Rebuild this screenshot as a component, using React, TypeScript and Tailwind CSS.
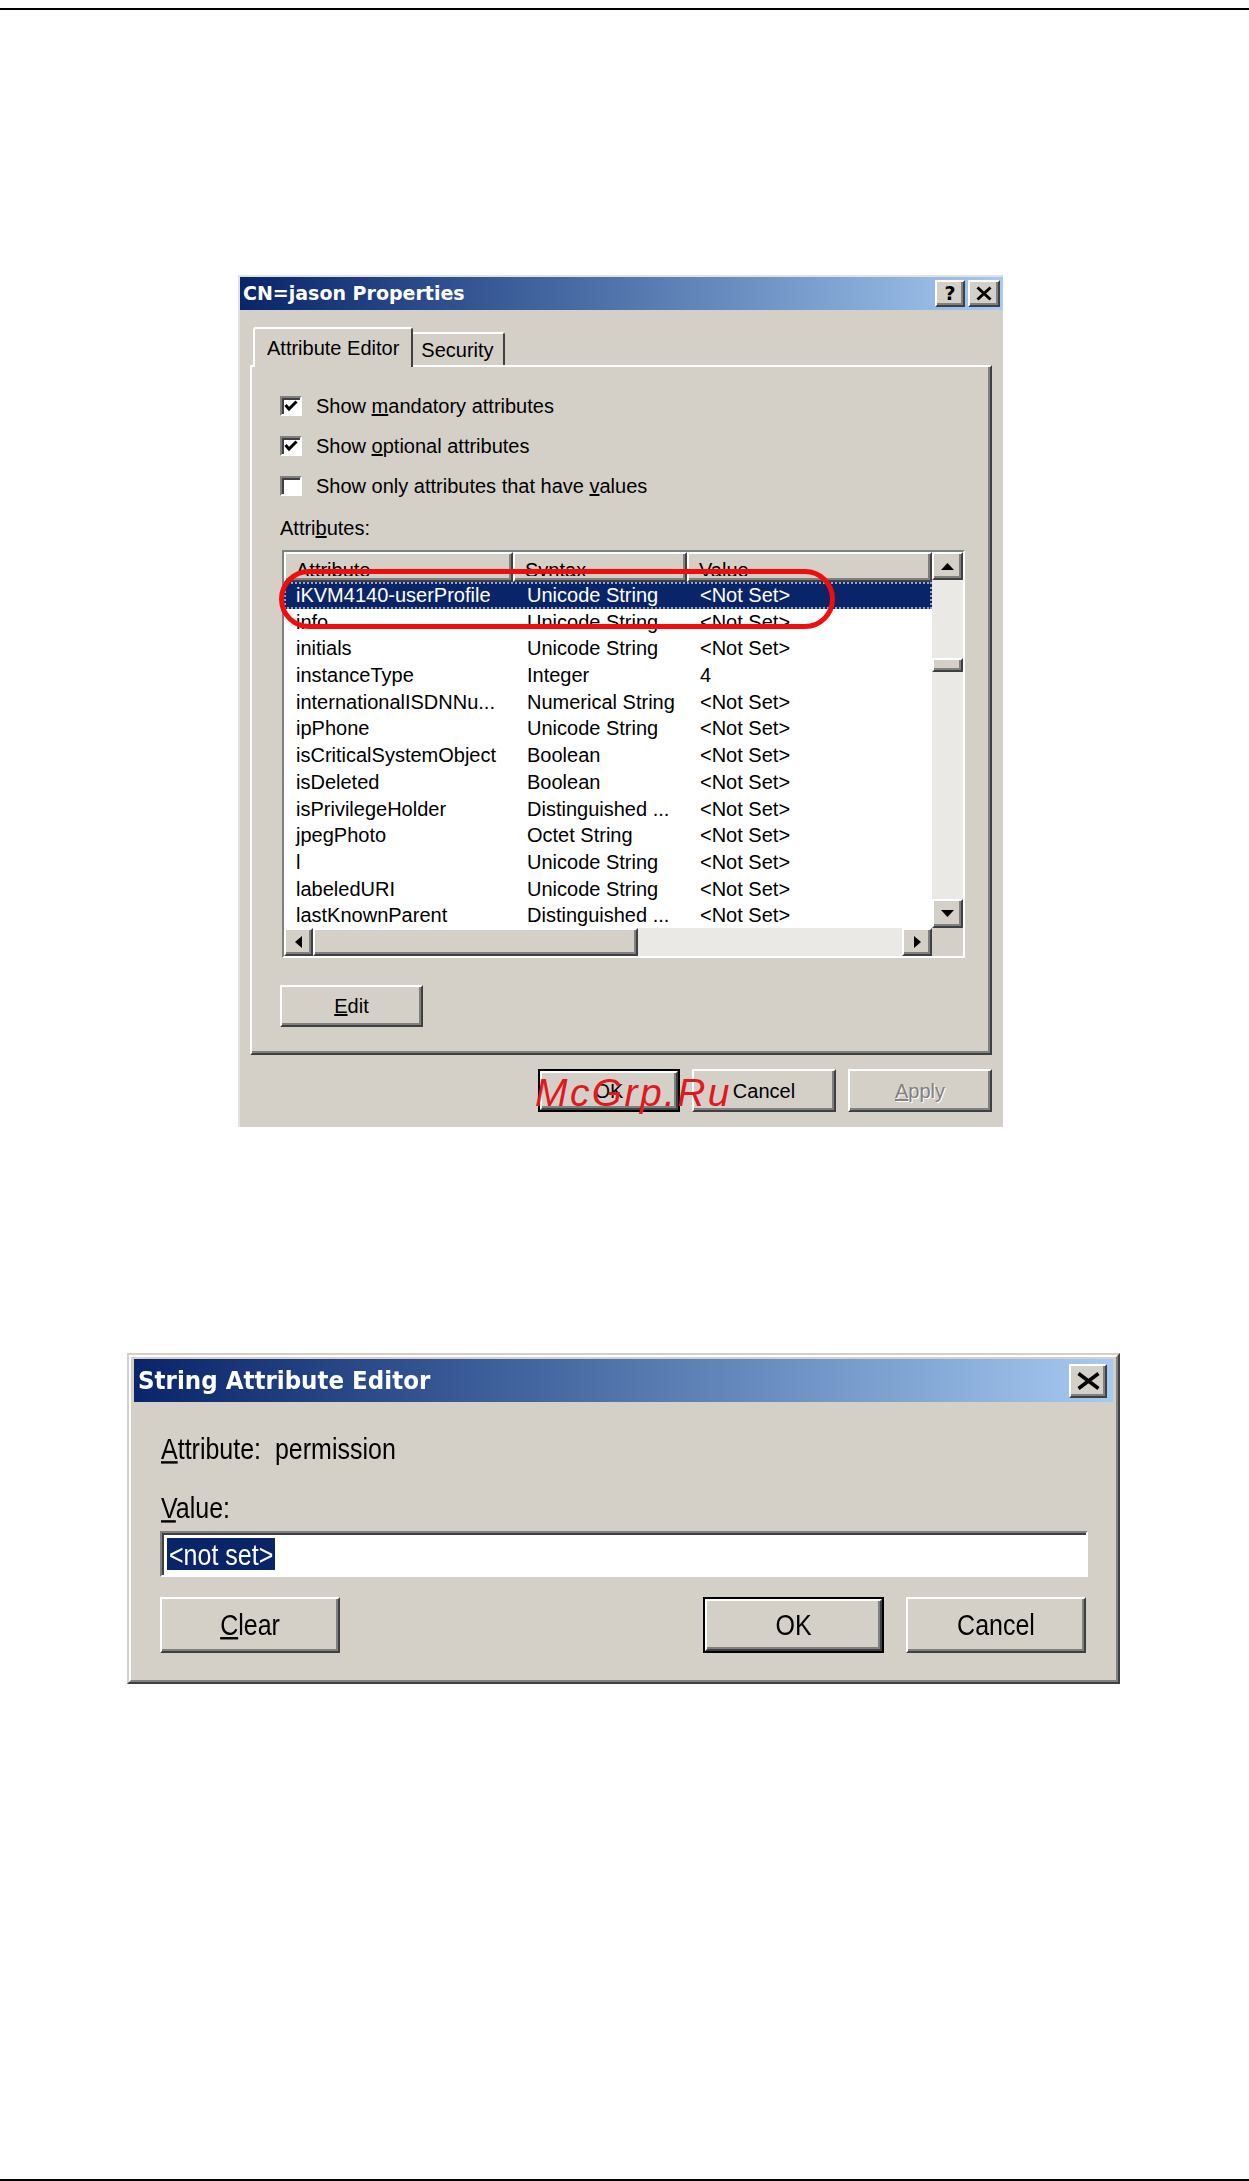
import React from "react";

const raised =
  "border-2 border-t-white border-l-white border-r-[#404040] border-b-[#404040] shadow-[inset_-2px_-2px_0_#808080] bg-[#d4d0c8]";
const sunken =
  "border-2 border-t-[#808080] border-l-[#808080] border-r-white border-b-white shadow-[inset_2px_2px_0_#404040]";

const rows = [
  ["iKVM4140-userProfile", "Unicode String", "<Not Set>"],
  ["info", "Unicode String", "<Not Set>"],
  ["initials", "Unicode String", "<Not Set>"],
  ["instanceType", "Integer", "4"],
  ["internationalISDNNu...", "Numerical String", "<Not Set>"],
  ["ipPhone", "Unicode String", "<Not Set>"],
  ["isCriticalSystemObject", "Boolean", "<Not Set>"],
  ["isDeleted", "Boolean", "<Not Set>"],
  ["isPrivilegeHolder", "Distinguished ...", "<Not Set>"],
  ["jpegPhoto", "Octet String", "<Not Set>"],
  ["l", "Unicode String", "<Not Set>"],
  ["labeledURI", "Unicode String", "<Not Set>"],
  ["lastKnownParent", "Distinguished ...", "<Not Set>"],
];

function CloseGlyph({ w, h, sw }: { w: number; h: number; sw: number }) {
  return (
    <svg width={w} height={h} viewBox={`0 0 ${w} ${h}`}>
      <path
        d={`M1.5 1.5 L${w - 1.5} ${h - 1.5} M${w - 1.5} 1.5 L1.5 ${h - 1.5}`}
        stroke="black"
        strokeWidth={sw}
      />
    </svg>
  );
}

function Arrow({ dir }: { dir: "up" | "down" | "left" | "right" }) {
  if (dir === "up")
    return (
      <svg width="13" height="7">
        <polygon points="0,7 13,7 6.5,0" fill="black" />
      </svg>
    );
  if (dir === "down")
    return (
      <svg width="13" height="7">
        <polygon points="0,0 13,0 6.5,7" fill="black" />
      </svg>
    );
  if (dir === "left")
    return (
      <svg width="7" height="12">
        <polygon points="7,0 7,12 0,6" fill="black" />
      </svg>
    );
  return (
    <svg width="7" height="12">
      <polygon points="0,0 0,12 7,6" fill="black" />
    </svg>
  );
}

function CheckBox({ checked }: { checked: boolean }) {
  return (
    <div className={`w-[22px] h-[20px] bg-white flex items-center justify-center ${sunken}`}>
      {checked && (
        <svg width="14" height="12" viewBox="0 0 14 12">
          <path d="M1.5 5 L5 9 L12.5 1.5" stroke="black" strokeWidth="3" fill="none" />
        </svg>
      )}
    </div>
  );
}

function PropertiesDialog() {
  return (
    <div className="relative ml-[238px] mt-[265px] w-[765px] bg-[#d4d0c8] border-t-2 border-l-2 border-t-[#e4e2dc] border-l-[#e4e2dc] pb-[15px] text-[20px] text-black">
      {/* title bar */}
      <div className="flex h-[33px] items-center justify-between bg-linear-to-r from-[#0a246a] to-[#a6caf0] pl-[3px] pr-[3px]">
        <span className="font-['DejaVu_Sans',Verdana,sans-serif] text-[19px] font-bold text-white">
          CN=jason Properties
        </span>
        <div className="flex gap-[3px]">
          <div className={`w-[30px] h-[27px] flex items-center justify-center ${raised}`}>
            <span className="font-['DejaVu_Sans',Verdana,sans-serif] text-[19px] font-bold leading-none">?</span>
          </div>
          <div className={`w-[32px] h-[27px] flex items-center justify-center ${raised}`}>
            <CloseGlyph w={16} h={15} sw={3} />
          </div>
        </div>
      </div>

      {/* tabs */}
      <div className="relative z-10 ml-[13px] mt-[17px] flex items-end">
        <div className="h-[40px] -mb-[2px] pl-[12px] pr-[12px] flex items-center bg-[#d4d0c8] border-t-2 border-l-2 border-r-2 border-t-white border-l-white border-r-[#404040] rounded-t-[3px]">
          Attribute Editor
        </div>
        <div className="h-[33px] pl-[8px] pr-[9px] flex items-center bg-[#d4d0c8] border-t-2 border-r-2 border-t-white border-r-[#404040] rounded-tr-[3px]">
          Security
        </div>
      </div>

      {/* tab panel */}
      <div className="ml-[10px] mr-[11px] border-2 border-t-white border-l-white border-r-[#404040] border-b-[#404040] shadow-[inset_-2px_-2px_0_#808080] pl-[28px] pt-[19px] pb-[26px]">
        <div className="h-[40px] flex items-center gap-[14px]">
          <CheckBox checked />
          <span>
            Show <u>m</u>andatory attributes
          </span>
        </div>
        <div className="h-[40px] flex items-center gap-[14px]">
          <CheckBox checked />
          <span>
            Show <u>o</u>ptional attributes
          </span>
        </div>
        <div className="h-[40px] flex items-center gap-[14px]">
          <CheckBox checked={false} />
          <span>
            Show only attributes that have <u>v</u>alues
          </span>
        </div>
        <div className="mt-[2px] h-[40px] flex items-center">
          <span>
            Attri<u>b</u>utes:
          </span>
        </div>

        {/* list view */}
        <div className={`mt-[2px] ml-[2px] w-[683px] h-[408px] bg-white ${sunken}`}>
          <div className="grid grid-cols-[648px_31px] grid-rows-[376px_28px]">
            <div className="overflow-hidden bg-white">
              <div className="flex h-[30px]">
                {[
                  ["Attribute", "w-[229px]"],
                  ["Syntax", "w-[174px]"],
                  ["Value", "w-[245px]"],
                ].map(([t, w]) => (
                  <div key={t} className={`${w} h-[30px] overflow-hidden ${raised}`}>
                    <div className="h-[22px] overflow-hidden pt-[3px] pl-[10px] leading-[26px]">{t}</div>
                  </div>
                ))}
              </div>
              {rows.map((r, i) => (
                <div
                  key={r[0]}
                  className={`flex h-[26.7px] leading-[26.7px] whitespace-nowrap ${
                    i === 0
                      ? "bg-[#0a246a] text-white outline-2 outline-dotted -outline-offset-2 outline-[#9aa4c4]"
                      : ""
                  }`}
                >
                  <div className="w-[229px] pl-[12px]">{r[0]}</div>
                  <div className="w-[174px] pl-[14px]">{r[1]}</div>
                  <div className="w-[245px] pl-[13px]">{r[2]}</div>
                </div>
              ))}
            </div>
            {/* vertical scrollbar */}
            <div className="flex flex-col">
              <div className={`h-[28px] flex items-center justify-center ${raised}`}>
                <Arrow dir="up" />
              </div>
              <div className="flex-1 bg-[#ebe9e5] pt-[78px]">
                <div className={`h-[14px] ${raised}`} />
              </div>
              <div className={`h-[29px] flex items-center justify-center ${raised}`}>
                <Arrow dir="down" />
              </div>
            </div>
            {/* horizontal scrollbar */}
            <div className="flex">
              <div className={`w-[29px] flex items-center justify-center ${raised}`}>
                <Arrow dir="left" />
              </div>
              <div className={`w-[325px] ${raised}`} />
              <div className="flex-1 bg-[#ebe9e5]" />
              <div className={`w-[30px] flex items-center justify-center ${raised}`}>
                <Arrow dir="right" />
              </div>
            </div>
            <div className="bg-[#d4d0c8]" />
          </div>
        </div>

        <div className={`mt-[27px] w-[143px] h-[42px] flex items-center justify-center ${raised}`}>
          <span>
            <u>E</u>dit
          </span>
        </div>
      </div>

      {/* dialog buttons */}
      <div className="mt-[14px] mr-[11px] flex justify-end gap-[12px]">
        <div className="w-[142px] h-[43px] border-2 border-black">
          <div className={`h-full flex items-center justify-center ${raised}`}>OK</div>
        </div>
        <div className={`w-[144px] h-[43px] flex items-center justify-center ${raised}`}>Cancel</div>
        <div className={`w-[144px] h-[43px] flex items-center justify-center text-[#808080] [text-shadow:1px_1px_0_#ffffff] ${raised}`}>
          <span>
            <u>A</u>pply
          </span>
        </div>
      </div>

      {/* red highlight around selected row */}
      <div className="absolute left-[39px] top-[292px] w-[556px] h-[60px] rounded-[30px] border-[5px] border-[#f20d0d]" />

      {/* watermark */}
      <span className="absolute left-[295px] top-[796px] text-[39px] leading-[39px] italic tracking-[2.4px] text-[#e0191f] whitespace-nowrap">
        McGrp.Ru
      </span>
    </div>
  );
}

function StringEditorDialog() {
  return (
    <div className="ml-[127px] mt-[226px] w-[993px] border-2 border-t-[#d4d0c8] border-l-[#d4d0c8] border-r-[#404040] border-b-[#404040] text-[25px] text-black">
      <div className="border-2 border-t-white border-l-white border-r-[#808080] border-b-[#808080] bg-[#d4d0c8] px-[3px] pt-[2px] pb-[3px]">
        <div className="flex h-[43px] items-center justify-between bg-linear-to-r from-[#0a246a] to-[#a6caf0] pl-[4px] pr-[6px]">
          <span className="inline-block scale-y-[1.1] font-['DejaVu_Sans',Verdana,sans-serif] text-[23px] font-bold text-white">
            String Attribute Editor
          </span>
          <div className={`w-[38px] h-[34px] flex items-center justify-center ${raised}`}>
            <CloseGlyph w={23} h={18} sw={3.5} />
          </div>
        </div>

        <div className="pl-[27px]">
          <div className="mt-[28px] h-[36px] leading-[36px]">
            <span className="inline-block scale-y-[1.2]">
              <u>A</u>ttribute:&nbsp; permission
            </span>
          </div>
          <div className="mt-[23px] h-[36px] leading-[36px]">
            <span className="inline-block scale-y-[1.2]">
              <u>V</u>alue:
            </span>
          </div>
          <div className={`-ml-[1px] mt-[6px] w-[928px] h-[46px] bg-white flex items-center pl-[5px] ${sunken}`}>
            <div className="h-[32px] px-[2px] bg-[#0a246a] text-white leading-[32px]">
              <span className="inline-block scale-y-[1.2]">&lt;not set&gt;</span>
            </div>
          </div>
          <div className="-ml-[1px] mt-[20px] mb-[24px] w-[926px] flex">
            <div className={`w-[180px] h-[56px] flex items-center justify-center ${raised}`}>
              <span className="inline-block scale-y-[1.2]">
                <u>C</u>lear
              </span>
            </div>
            <div className="flex-1" />
            <div className="w-[181px] h-[56px] border-2 border-black">
              <div className={`h-full flex items-center justify-center ${raised}`}>
                <span className="inline-block scale-y-[1.2]">OK</span>
              </div>
            </div>
            <div className={`ml-[22px] w-[180px] h-[56px] flex items-center justify-center ${raised}`}>
              <span className="inline-block scale-y-[1.2]">Cancel</span>
            </div>
          </div>
        </div>
      </div>
    </div>
  );
}

export default function App() {
  return (
    <div className="w-[1249px] h-[2181px] bg-white flex flex-col font-['Liberation_Sans',Arial,sans-serif]">
      <div className="mt-[8px] h-[2px] bg-black" />
      <PropertiesDialog />
      <StringEditorDialog />
      <div className="mt-auto h-[2px] bg-black" />
    </div>
  );
}
